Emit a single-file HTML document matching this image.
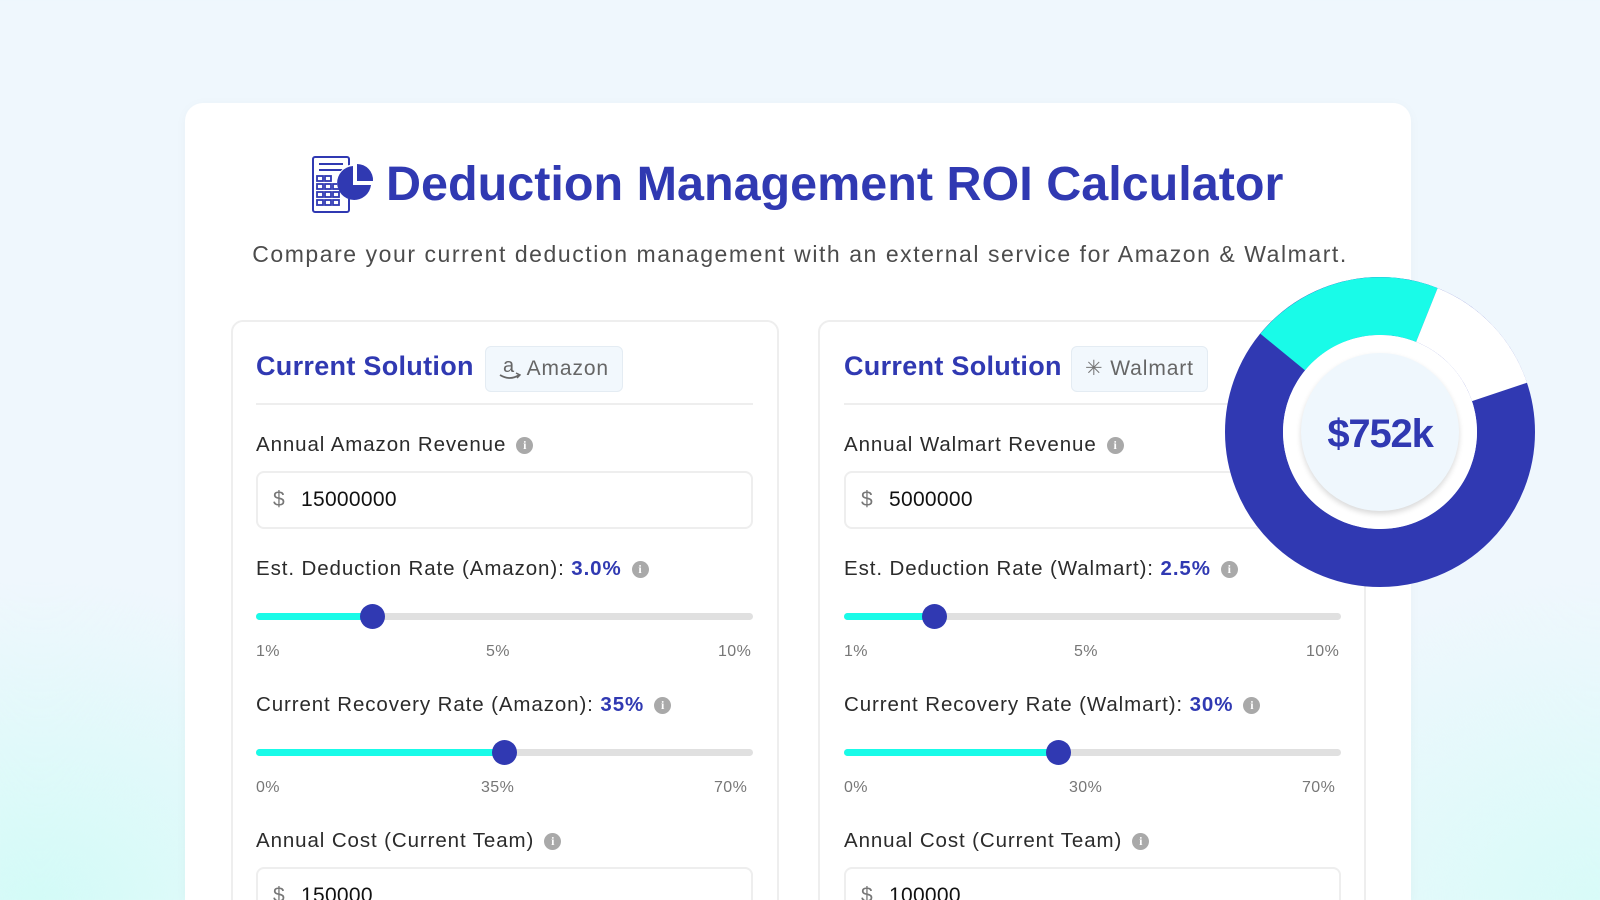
<!DOCTYPE html>
<html><head><meta charset="utf-8"><style>
*{box-sizing:border-box;margin:0;padding:0}
html{width:1600px;height:900px;overflow:hidden}
body{width:1600px;height:900px;overflow:hidden;font-family:"Liberation Sans",sans-serif;position:relative;
background:radial-gradient(ellipse 420px 320px at 40px 900px,#d3fbf7 0%,rgba(220,250,248,0) 100%),radial-gradient(ellipse 420px 320px at 1600px 900px,#d8fbf8 0%,rgba(220,250,248,0) 100%),#eff7fd}
.a{position:absolute}
.card{left:185px;top:103px;width:1226px;height:797px;background:#fff;border-radius:18px 18px 0 0;box-shadow:0 2px 12px rgba(0,0,0,.03)}
h1{position:absolute;left:386px;top:156px;font-size:48.5px;font-weight:bold;color:#3039b2;white-space:nowrap;letter-spacing:0}
.sub{left:0;width:1600px;text-align:center;top:241px;font-size:23px;color:#4c4c4c;letter-spacing:1.55px}
.panel{top:320px;width:548px;height:600px;border:2px solid #eeeeee;border-radius:12px;background:#fff}
.h{font-size:27px;font-weight:bold;color:#3039b2;letter-spacing:.3px}
.badge{height:46px;border:1px solid #e4ecf3;background:#f2f8fd;border-radius:6px;font-size:21px;color:#666;padding:0 13px;line-height:44px;white-space:nowrap;letter-spacing:.9px}
.div{height:2px;background:#eeeeee;width:497px}
.lab{font-size:20.5px;color:#2b2b2b;white-space:nowrap;letter-spacing:.9px}
.lab b{color:#3039b2;font-weight:bold}
.i{display:inline-block;width:17px;height:17px;border-radius:50%;background:#a9a9a9;color:#fff;font-size:12px;font-weight:bold;text-align:center;line-height:17px;vertical-align:2px;margin-left:10px;font-family:"Liberation Serif",serif;letter-spacing:0}
.inp{width:497px;height:58px;border:2px solid #eeeeee;border-radius:8px;font-size:21px;color:#111;line-height:54px;padding-left:15px;letter-spacing:.3px}
.inp span{color:#777;margin-right:16px}
.track{height:7px;width:497px;background:#e0e0e0;border-radius:4px}
.fill{height:7px;background:#19fbe8;border-radius:4px;position:absolute;left:0;top:0}
.th{width:25px;height:25px;border-radius:50%;background:#3039b2;position:absolute;top:-9px}
.tk{font-size:16px;color:#777;letter-spacing:.4px}
</style></head><body>
<div class="a card"></div>
<svg class="a" style="left:311px;top:155px" width="64" height="60" viewBox="0 0 64 60">
<rect x="2" y="2" width="36" height="55" rx="2" fill="none" stroke="#3039b2" stroke-width="2"/>
<line x1="8" y1="9" x2="32" y2="9" stroke="#3039b2" stroke-width="2"/>
<line x1="8" y1="15" x2="32" y2="15" stroke="#3039b2" stroke-width="2"/>
<g fill="none" stroke="#3039b2" stroke-width="1.8">
<rect x="6" y="21" width="6" height="5"/><rect x="14" y="21" width="6" height="5"/>
<rect x="6" y="29" width="6" height="5"/><rect x="14" y="29" width="6" height="5"/><rect x="22" y="29" width="6" height="5"/>
<rect x="6" y="37" width="6" height="5"/><rect x="14" y="37" width="6" height="5"/><rect x="22" y="37" width="6" height="5"/>
<rect x="6" y="45" width="6" height="5"/><rect x="14" y="45" width="6" height="5"/><rect x="22" y="45" width="6" height="5"/>
</g>
<circle cx="44" cy="27" r="18" fill="#fff"/>
<path d="M42 11 A17 17 0 1 0 60 30 L42 30 Z" fill="#3039b2"/>
<path d="M46 9 A16 16 0 0 1 62 26 L46 26 Z" fill="#3039b2"/>
</svg>
<h1>Deduction Management ROI Calculator</h1>
<div class="a sub">Compare your current deduction management with an external service for Amazon &amp; Walmart.</div>

<div class="a panel" style="left:231px"></div>
<div class="a panel" style="left:818px"></div>

<!-- left -->
<div class="a h" style="left:256px;top:351px">Current Solution</div>
<div class="a badge" style="left:485px;top:346px"><svg width="22" height="26" viewBox="0 0 22 26" style="vertical-align:-6px"><text x="4" y="17" font-family="Liberation Sans,sans-serif" font-size="20" fill="#666">a</text><path d="M1 20 Q11 26 20 20" fill="none" stroke="#666" stroke-width="1.8"/><path d="M17 18 L21 20 L18 23" fill="none" stroke="#666" stroke-width="1.5"/></svg> Amazon</div>
<div class="a div" style="left:256px;top:403px"></div>
<div class="a lab" style="left:256px;top:433px">Annual Amazon Revenue<span class="i">i</span></div>
<div class="a inp" style="left:256px;top:471px"><span>$</span>15000000</div>
<div class="a lab" style="left:256px;top:557px">Est. Deduction Rate (Amazon): <b>3.0%</b><span class="i">i</span></div>
<div class="a track" style="left:256px;top:613px"><div class="fill" style="width:117px"></div><div class="th" style="left:104px"></div></div>
<div class="a tk" style="left:256px;top:643px">1%</div><div class="a tk" style="left:486px;top:643px">5%</div><div class="a tk" style="left:718px;top:643px">10%</div>
<div class="a lab" style="left:256px;top:693px">Current Recovery Rate (Amazon): <b>35%</b><span class="i">i</span></div>
<div class="a track" style="left:256px;top:749px"><div class="fill" style="width:248px"></div><div class="th" style="left:236px"></div></div>
<div class="a tk" style="left:256px;top:779px">0%</div><div class="a tk" style="left:481px;top:779px">35%</div><div class="a tk" style="left:714px;top:779px">70%</div>
<div class="a lab" style="left:256px;top:829px">Annual Cost (Current Team)<span class="i">i</span></div>
<div class="a inp" style="left:256px;top:867px"><span>$</span>150000</div>

<!-- right -->
<div class="a h" style="left:844px;top:351px">Current Solution</div>
<div class="a badge" style="left:1071px;top:346px"><span style="color:#777">✳</span> Walmart</div>
<div class="a div" style="left:844px;top:403px"></div>
<div class="a lab" style="left:844px;top:433px">Annual Walmart Revenue<span class="i">i</span></div>
<div class="a inp" style="left:844px;top:471px"><span>$</span>5000000</div>
<div class="a lab" style="left:844px;top:557px">Est. Deduction Rate (Walmart): <b>2.5%</b><span class="i">i</span></div>
<div class="a track" style="left:844px;top:613px"><div class="fill" style="width:90px"></div><div class="th" style="left:78px"></div></div>
<div class="a tk" style="left:844px;top:643px">1%</div><div class="a tk" style="left:1074px;top:643px">5%</div><div class="a tk" style="left:1306px;top:643px">10%</div>
<div class="a lab" style="left:844px;top:693px">Current Recovery Rate (Walmart): <b>30%</b><span class="i">i</span></div>
<div class="a track" style="left:844px;top:749px"><div class="fill" style="width:214px"></div><div class="th" style="left:202px"></div></div>
<div class="a tk" style="left:844px;top:779px">0%</div><div class="a tk" style="left:1069px;top:779px">30%</div><div class="a tk" style="left:1302px;top:779px">70%</div>
<div class="a lab" style="left:844px;top:829px">Annual Cost (Current Team)<span class="i">i</span></div>
<div class="a inp" style="left:844px;top:867px"><span>$</span>100000</div>

<!-- donut -->
<svg class="a" style="left:1220px;top:272px" width="320" height="320" viewBox="-160 -160 320 320">
<circle r="126" fill="none" stroke="#3039b2" stroke-width="58"/>
<path d="M-119.6 -98.2 A155 155 0 0 1 57.6 -143.9 L36.1 -90.1 A97 97 0 0 0 -74.9 -61.6 Z" fill="#19fbe8"/>
<path d="M57.6 -143.9 A155 155 0 0 1 147 -49.3 L92 -30.9 A97 97 0 0 0 36.1 -90.1 Z" fill="#ffffff"/>
<circle r="97" fill="#fff"/>
<circle r="79" cy="3" fill="#000" opacity=".15" filter="blur(3px)"/>
<circle r="79" fill="#eff7fd"/>
<text x="0" y="15" text-anchor="middle" font-family="Liberation Sans,sans-serif" font-weight="bold" font-size="40" fill="#3039b2" letter-spacing="-1.2">$752k</text>
</svg>
</body></html>
